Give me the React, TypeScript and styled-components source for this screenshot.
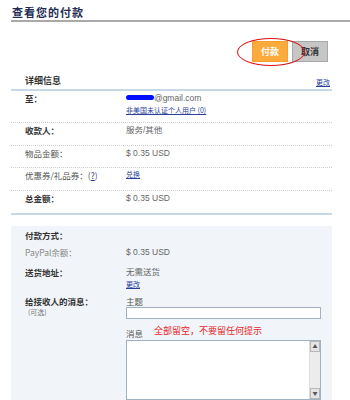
import React from "react"
import styled, { createGlobalStyle } from "styled-components"

const GlobalStyle = createGlobalStyle`
	body {
		margin: 0;
		background: #ffffff;
		font-family: "Noto Sans CJK SC", "DejaVu Sans", sans-serif;
	}
`

const Colors = {
	navy: "#1d2d55",
	label: "#333333",
	value: "#666666",
	link: "#2a3f9c",
	rule: "#c8d8e6",
	panel: "#f1f5f9",
}

const Page = styled.div`
	width: 350px;
	height: 400px;
	overflow: hidden;
	padding-left: 11px;
	box-sizing: border-box;
`

const Header = styled.h1`
	margin: 0;
	padding: 5px 0 1px 1px;
	font-size: 11px;
	line-height: 14px;
	letter-spacing: 1px;
	font-weight: bold;
	color: ${Colors.navy};
	border-bottom: 2px solid #a9a9a9;
`

const ButtonBar = styled.div`
	display: flex;
	justify-content: flex-end;
	gap: 4px;
	margin: 19px 22px 0 0;
	position: relative;
`

const PayButton = styled.button<{ $primary?: boolean }>`
	width: 36px;
	height: 21px;
	padding: 0;
	font-family: inherit;
	font-size: 9px;
	font-weight: bold;
	color: ${(p) => (p.$primary ? "#ffffff" : "#333333")};
	background: ${(p) => (p.$primary ? "#fbab3c" : "#c6c6c6")};
	border: 1px solid ${(p) => (p.$primary ? "#f4a030" : "#a8a8a8")};
`

const Circle = styled.div`
	position: absolute;
	left: 226px;
	top: -3px;
	width: 66px;
	height: 26px;
	border: 1.5px solid #dd1111;
	border-radius: 50%;
	pointer-events: none;
`

const Section = styled.div`
	margin: 12px 18px 0 0;
`

const SectionHead = styled.div`
	display: flex;
	justify-content: space-between;
	align-items: flex-end;
	padding: 0 2px 1px 14px;
	border-bottom: 2px solid ${Colors.rule};
`

const SectionTitle = styled.span`
	font-size: 9px;
	line-height: 14px;
	font-weight: bold;
	color: ${Colors.label};
`

const Link = styled.a`
	display: block;
	font-size: 7px;
	line-height: 11px;
	color: ${Colors.link};
	text-decoration: underline;
`

const Row = styled.div<{ $last?: boolean; $height: number }>`
	display: grid;
	grid-template-columns: 101px 1fr;
	align-items: start;
	height: ${(p) => p.$height}px;
	box-sizing: border-box;
	padding: 1px 0 0 14px;
	border-bottom: ${(p) => (p.$last ? "none" : "1px dotted #cfcfcf")};
`

const Label = styled.div<{ $strong?: boolean; $muted?: boolean }>`
	font-size: 8.5px;
	line-height: 13px;
	font-weight: ${(p) => (p.$strong ? "bold" : "normal")};
	color: ${(p) => (p.$muted ? "#888888" : p.$strong ? Colors.label : "#555555")};
`

const Value = styled.div`
	font-size: 8.5px;
	line-height: 13px;
	color: ${Colors.value};
	font-family: "Liberation Sans", "Noto Sans CJK SC", sans-serif;
`

const Mask = styled.span`
	display: inline-block;
	width: 28px;
	height: 5px;
	border-radius: 3px;
	background: #0010ff;
	vertical-align: 1px;
`

const Hint = styled.span`
	color: ${Colors.link};
	text-decoration: underline;
`

const TotalRule = styled.div`
	height: 2px;
	background: ${Colors.rule};
`

const Panel = styled.div`
	margin-top: 11px;
	background: ${Colors.panel};
	padding: 3px 0 0 14px;
	height: 178px;
	box-sizing: border-box;
`

const PanelRow = styled.div<{ $gap?: number }>`
	display: grid;
	grid-template-columns: 101px 1fr;
	margin-bottom: ${(p) => p.$gap ?? 0}px;
`

const Small = styled.div`
	font-size: 7px;
	line-height: 9px;
	color: #777777;
	padding-left: 3px;
`

const FieldLabel = styled.div<{ $spaced?: boolean }>`
	font-size: 8.5px;
	line-height: 12px;
	color: #555555;
	display: flex;
	align-items: flex-end;
	gap: 11px;
	margin-top: ${(p) => (p.$spaced ? 8 : 0)}px;
`

const Note = styled.span`
	color: #e5262a;
	font-size: 9px;
	line-height: 12px;
	position: relative;
	top: -2px;
`

const TextInput = styled.div`
	width: 195px;
	height: 12px;
	border: 1px solid #9fb2c2;
	background: #ffffff;
	box-sizing: border-box;
`

const TextArea = styled.div`
	width: 195px;
	height: 60px;
	margin-top: 1px;
	border: 1px solid #9fb2c2;
	background: #ffffff;
	box-sizing: border-box;
	display: flex;
	justify-content: flex-end;
`

const ScrollBar = styled.div`
	width: 10px;
	background: #ececec;
	display: flex;
	flex-direction: column;
	justify-content: space-between;
	border-left: 1px solid #dcdcdc;
`

const Arrow = styled.div`
	height: 9px;
	background: #e4e4e4;
	border: 1px solid #b8b8b8;
	font-size: 5px;
	line-height: 8px;
	text-align: center;
	color: #555555;
`

export default function App() {
	return (
		<Page>
			<GlobalStyle />
			<Header>查看您的付款</Header>
			<ButtonBar>
				<PayButton $primary>付款</PayButton>
				<PayButton>取消</PayButton>
				<Circle />
			</ButtonBar>
			<Section>
				<SectionHead>
					<SectionTitle>详细信息</SectionTitle>
					<Link>更改</Link>
				</SectionHead>
				<Row $height={32}>
					<Label $strong>至：</Label>
					<div>
						<Value>
							<Mask />@gmail.com
						</Value>
						<Link>非美国未认证个人用户 (0)</Link>
					</div>
				</Row>
				<Row $height={23}>
					<Label $strong>收款人：</Label>
					<Value>服务/其他</Value>
				</Row>
				<Row $height={22}>
					<Label>物品金额：</Label>
					<Value>$ 0.35 USD</Value>
				</Row>
				<Row $height={23}>
					<Label>
						优惠券/礼品券：(<Hint>?</Hint>)
					</Label>
					<Link>兑换</Link>
				</Row>
				<Row $height={22} $last>
					<Label $strong>总金额：</Label>
					<Value>$ 0.35 USD</Value>
				</Row>
				<TotalRule />
				<Panel>
					<PanelRow $gap={4}>
						<Label $strong>付款方式：</Label>
					</PanelRow>
					<PanelRow $gap={7}>
						<Label $muted>PayPal余额：</Label>
						<Value>$ 0.35 USD</Value>
					</PanelRow>
					<PanelRow $gap={5}>
						<Label $strong>送货地址：</Label>
						<div>
							<Value>无需送货</Value>
							<Link>更改</Link>
						</div>
					</PanelRow>
					<PanelRow>
						<div>
							<Label $strong>给接收人的消息：</Label>
							<Small>(可选)</Small>
						</div>
						<div>
							<FieldLabel>主题</FieldLabel>
							<TextInput />
							<FieldLabel $spaced>
								消息<Note>全部留空，不要留任何提示</Note>
							</FieldLabel>
							<TextArea>
								<ScrollBar>
									<Arrow>▲</Arrow>
									<Arrow>▼</Arrow>
								</ScrollBar>
							</TextArea>
						</div>
					</PanelRow>
				</Panel>
			</Section>
		</Page>
	)
}
